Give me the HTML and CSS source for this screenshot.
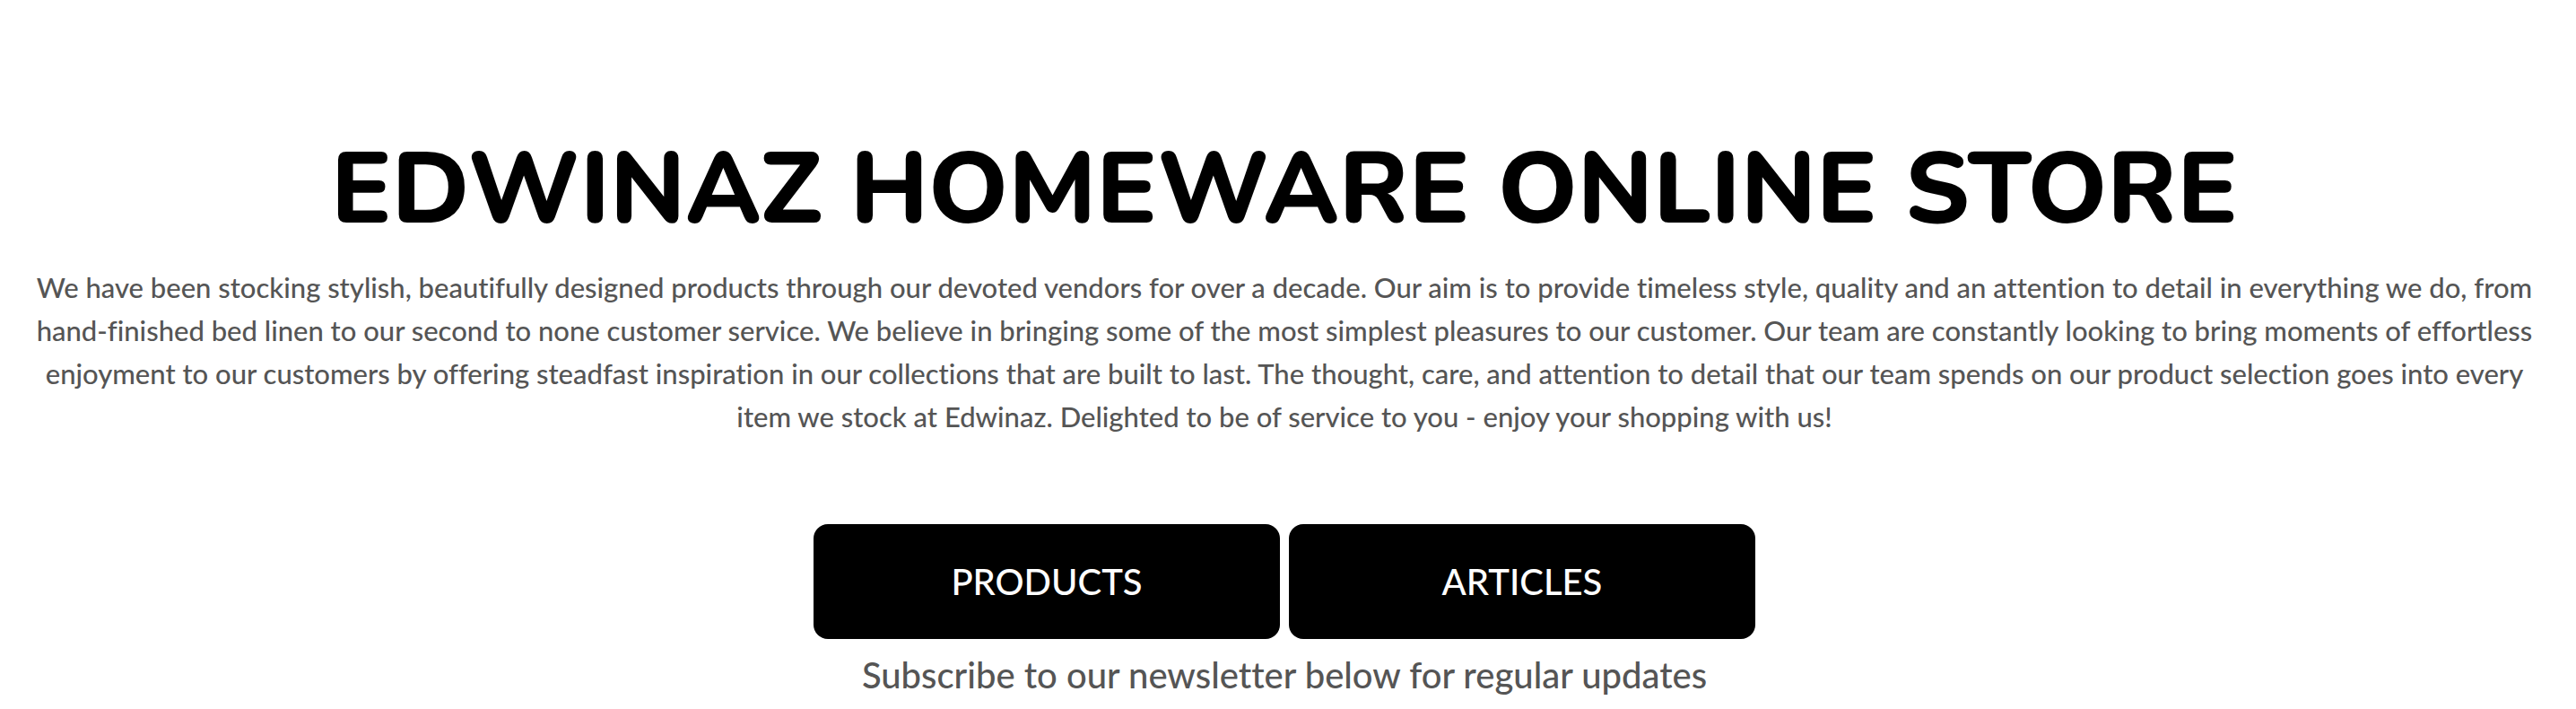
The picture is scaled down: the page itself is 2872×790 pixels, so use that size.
FILE: index.html
```html
<!DOCTYPE html>
<html lang="en">
<head>
<meta charset="utf-8">
<title>Edwinaz Homeware Online Store</title>
<link rel="stylesheet" href="styles.css">
</head>
<body>
<main class="intro">
  <h1 class="title">EDWINAZ HOMEWARE ONLINE STORE</h1>
  <p class="about">We have been stocking stylish, beautifully designed products through our devoted vendors for over a decade. Our aim is to provide timeless style, quality and an attention to detail in everything we do, from hand-finished bed linen to our second to none customer service. We believe in bringing some of the most simplest pleasures to our customer. Our team are constantly looking to bring moments of effortless enjoyment to our customers by offering steadfast inspiration in our collections that are built to last. The thought, care, and attention to detail that our team spends on our product selection goes into every item we stock at Edwinaz. Delighted to be of service to you - enjoy your shopping with us!</p>
  <nav class="actions">
    <a class="button" href="#products">PRODUCTS</a>
    <a class="button" href="#articles">ARTICLES</a>
  </nav>
  <p class="newsletter">Subscribe to our newsletter below for regular updates</p>
</main>
</body>
</html>
```

FILE: styles.css
```css
body {
  margin: 0;
  background: #fff;
  color: #555;
  font-family: Lato, "Liberation Sans", sans-serif;
  font-variant-ligatures: no-common-ligatures;
}

.intro {
  padding: 148px 32px 0 24px;
  text-align: center;
}

.title {
  margin: 0;
  color: #000;
  font-family: Nunito, Lato, sans-serif;
  font-size: 112px;
  font-weight: 800;
  line-height: 128px;
}

.about {
  margin: 20px 0 0;
  font-size: 31px;
  font-weight: 500;
  line-height: 48px;
}

.actions {
  display: flex;
  justify-content: center;
  gap: 10px;
  margin-top: 96px;
}

.button {
  box-sizing: border-box;
  width: 520px;
  padding: 32px;
  border-radius: 16px;
  background: #000;
  color: #fff;
  font-size: 40px;
  font-weight: 500;
  line-height: 64px;
  text-decoration: none;
}

.newsletter {
  margin: 10px 0 0;
  font-size: 40px;
  font-weight: 500;
  line-height: 60px;
}
```
